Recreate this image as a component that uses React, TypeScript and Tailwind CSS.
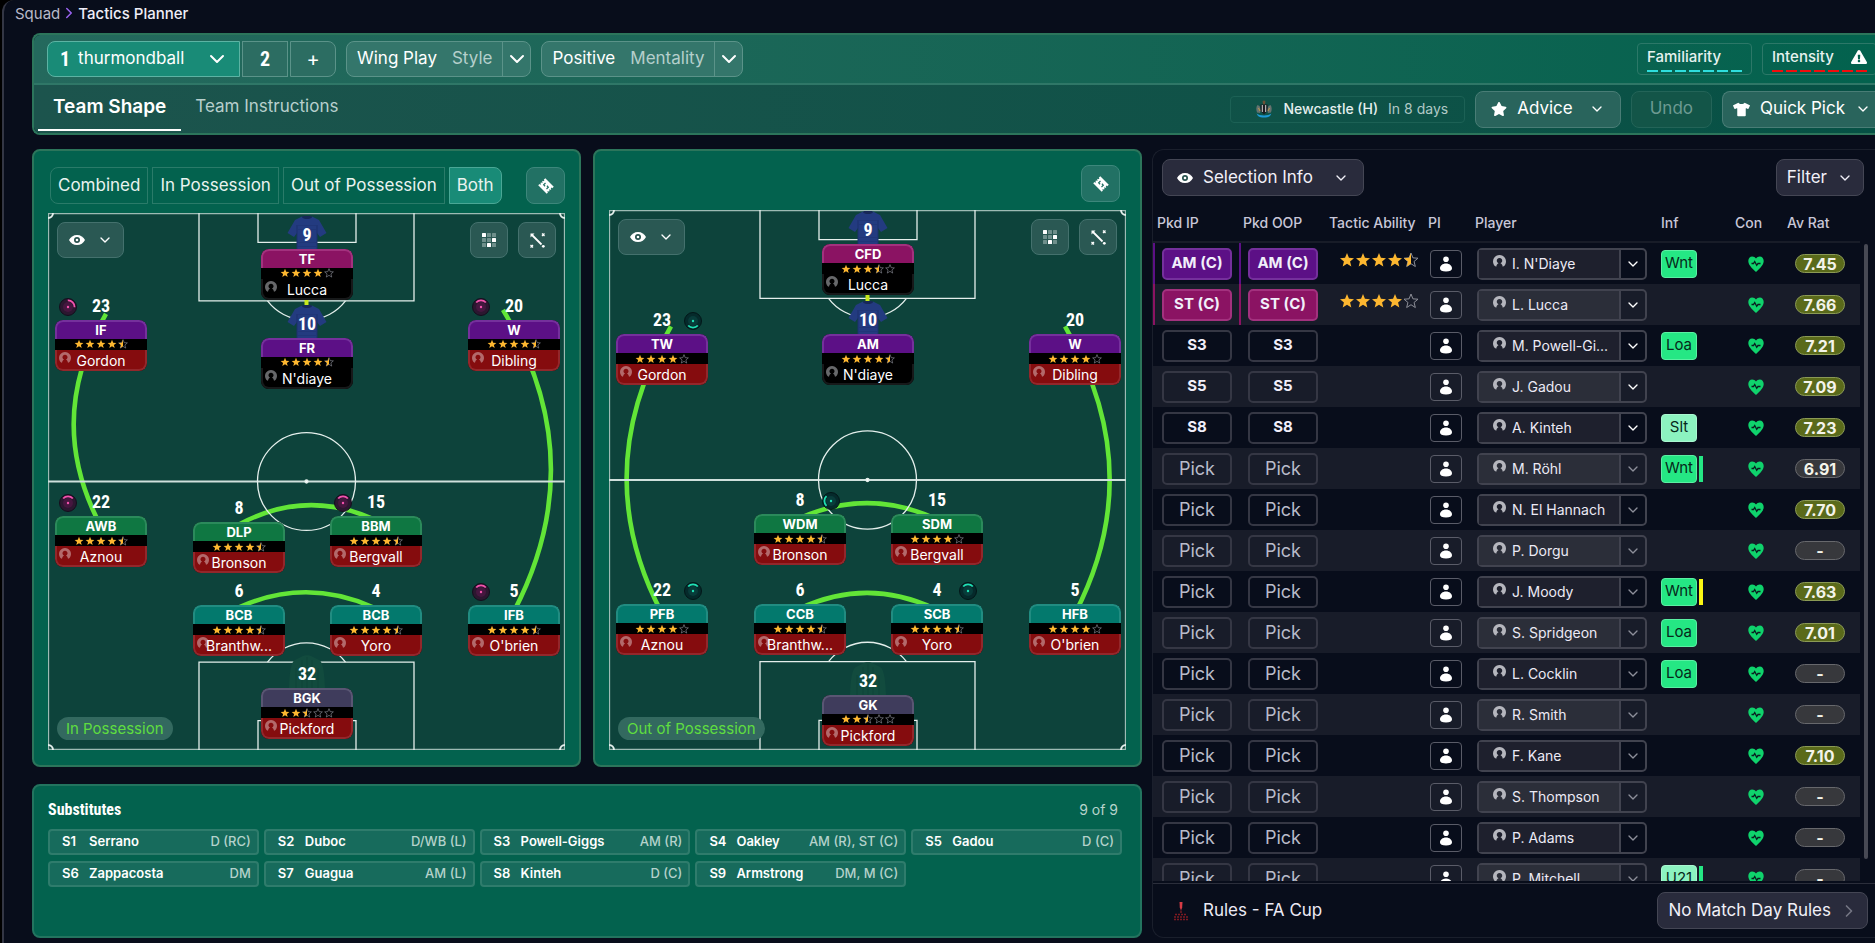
import type { ReactNode } from "react";
import clsx from "clsx";
import { ChevronDown, ChevronRight } from "lucide-react";
import { FaExclamationTriangle, FaStar, FaTshirt } from "react-icons/fa";

type Line = "striker" | "attack" | "midfield" | "defence" | "keeper";
type Dial = { side: "left" | "right"; turn: number };

type PitchPlayer = {
  role: string;
  name: string;
  number: number;
  stars: number;
  line: Line;
  x: number;
  y: number;
  danger?: boolean;
  shirt?: "blue" | "green";
  dial?: Dial;
};

type SquadPlayer = {
  name: string;
  ip: string;
  oop: string;
  line?: Line;
  stars?: number;
  info?: string;
  infoPale?: boolean;
  flag?: "green" | "yellow";
  rating: string;
};

const PITCH_W = 517;
const PITCH_H = 538;
const STAR_PATH = "M12 1.5l2.9 7.3 7.6.5-5.9 4.9 1.9 7.6-6.5-4.2-6.5 4.2 1.9-7.6L1.5 9.3l7.6-.5z";
const NARROW = "font-['Liberation_Sans_Narrow','Roboto_Condensed','Roboto',sans-serif]";

const lineHeader: Record<Line, string> = {
  striker: "bg-[#8b1363] border-[#a3317e]",
  attack: "bg-[#5c1086] border-[#75309c]",
  midfield: "bg-[#0f7742] border-[#2b8a5b]",
  defence: "bg-[#03796d] border-[#218c81]",
  keeper: "bg-[#3f3c5c] border-[#595673]",
};

const inPossession: PitchPlayer[] = [
  { role: "TF", name: "Lucca", number: 9, stars: 4, line: "striker", x: 259, y: 36, shirt: "blue" },
  { role: "IF", name: "Gordon", number: 23, stars: 4.5, line: "attack", x: 53, y: 107, danger: true, dial: { side: "left", turn: 45 } },
  { role: "FR", name: "N'diaye", number: 10, stars: 4.5, line: "attack", x: 259, y: 125, shirt: "blue" },
  { role: "W", name: "Dibling", number: 20, stars: 4.5, line: "attack", x: 466, y: 107, danger: true, dial: { side: "left", turn: 0 } },
  { role: "AWB", name: "Aznou", number: 22, stars: 4.5, line: "midfield", x: 53, y: 304, danger: true, dial: { side: "left", turn: 0 } },
  { role: "DLP", name: "Bronson", number: 8, stars: 4.5, line: "midfield", x: 191, y: 310, danger: true },
  { role: "BBM", name: "Bergvall", number: 15, stars: 4.5, line: "midfield", x: 328, y: 304, danger: true, dial: { side: "left", turn: 0 } },
  { role: "BCB", name: "Branthw...", number: 6, stars: 4.5, line: "defence", x: 191, y: 393, danger: true },
  { role: "BCB", name: "Yoro", number: 4, stars: 4.5, line: "defence", x: 328, y: 393, danger: true },
  { role: "IFB", name: "O'brien", number: 5, stars: 4.5, line: "defence", x: 466, y: 393, danger: true, dial: { side: "left", turn: 0 } },
  { role: "BGK", name: "Pickford", number: 32, stars: 2.5, line: "keeper", x: 259, y: 476, danger: true, shirt: "green" },
];

const outOfPossession: PitchPlayer[] = [
  { role: "CFD", name: "Lucca", number: 9, stars: 3.5, line: "striker", x: 259, y: 34, shirt: "blue" },
  { role: "TW", name: "Gordon", number: 23, stars: 4, line: "attack", x: 53, y: 124, danger: true, dial: { side: "right", turn: 180 } },
  { role: "AM", name: "N'diaye", number: 10, stars: 4.5, line: "attack", x: 259, y: 124, shirt: "blue" },
  { role: "W", name: "Dibling", number: 20, stars: 4, line: "attack", x: 466, y: 124, danger: true },
  { role: "WDM", name: "Bronson", number: 8, stars: 4.5, line: "midfield", x: 191, y: 303, danger: true, dial: { side: "right", turn: -90 } },
  { role: "SDM", name: "Bergvall", number: 15, stars: 4, line: "midfield", x: 328, y: 303, danger: true },
  { role: "PFB", name: "Aznou", number: 22, stars: 4, line: "defence", x: 53, y: 393, danger: true, dial: { side: "right", turn: 0 } },
  { role: "CCB", name: "Branthw...", number: 6, stars: 4.5, line: "defence", x: 191, y: 393, danger: true },
  { role: "SCB", name: "Yoro", number: 4, stars: 4.5, line: "defence", x: 328, y: 393, danger: true, dial: { side: "right", turn: 0 } },
  { role: "HFB", name: "O'brien", number: 5, stars: 4, line: "defence", x: 466, y: 393, danger: true },
  { role: "GK", name: "Pickford", number: 32, stars: 2.5, line: "keeper", x: 259, y: 483, danger: true, shirt: "green" },
];

const inLinks = [
  "M58 101Q-4 207 53 314",
  "M455 97Q545 247 466 399",
  "M191 312Q258 276 326 307",
  "M191 395Q258 365 325 395",
];

const outLinks = [
  "M62 116Q-22 260 53 402",
  "M456 116Q540 260 466 402",
  "M191 307Q258 277 325 307",
  "M191 397Q258 366 325 397",
];

const subs = [
  ["S1", "Serrano", "D (RC)"],
  ["S2", "Duboc", "D/WB (L)"],
  ["S3", "Powell-Giggs", "AM (R)"],
  ["S4", "Oakley", "AM (R), ST (C)"],
  ["S5", "Gadou", "D (C)"],
  ["S6", "Zappacosta", "DM"],
  ["S7", "Guagua", "AM (L)"],
  ["S8", "Kinteh", "D (C)"],
  ["S9", "Armstrong", "DM, M (C)"],
];

const squad: SquadPlayer[] = [
  { name: "I. N'Diaye", ip: "AM (C)", oop: "AM (C)", line: "attack", stars: 4.5, info: "Wnt", rating: "7.45" },
  { name: "L. Lucca", ip: "ST (C)", oop: "ST (C)", line: "striker", stars: 4, rating: "7.66" },
  { name: "M. Powell-Gi...", ip: "S3", oop: "S3", info: "Loa", rating: "7.21" },
  { name: "J. Gadou", ip: "S5", oop: "S5", rating: "7.09" },
  { name: "A. Kinteh", ip: "S8", oop: "S8", info: "Slt", infoPale: true, rating: "7.23" },
  { name: "M. Röhl", ip: "Pick", oop: "Pick", info: "Wnt", flag: "green", rating: "6.91" },
  { name: "N. El Hannach", ip: "Pick", oop: "Pick", rating: "7.70" },
  { name: "P. Dorgu", ip: "Pick", oop: "Pick", rating: "-" },
  { name: "J. Moody", ip: "Pick", oop: "Pick", info: "Wnt", flag: "yellow", rating: "7.63" },
  { name: "S. Spridgeon", ip: "Pick", oop: "Pick", info: "Loa", rating: "7.01" },
  { name: "L. Cocklin", ip: "Pick", oop: "Pick", info: "Loa", rating: "-" },
  { name: "R. Smith", ip: "Pick", oop: "Pick", rating: "-" },
  { name: "F. Kane", ip: "Pick", oop: "Pick", rating: "7.10" },
  { name: "S. Thompson", ip: "Pick", oop: "Pick", rating: "-" },
  { name: "P. Adams", ip: "Pick", oop: "Pick", rating: "-" },
  { name: "P. Mitchell", ip: "Pick", oop: "Pick", info: "U21", infoPale: true, flag: "green", rating: "-" },
];

function Stars({ value, size, gap }: { value: number; size: number; gap: string }) {
  return (
    <span className={clsx("flex items-center", gap)} role="img" aria-label={`${value} stars`}>
      {[0, 1, 2, 3, 4].map((i) => {
        const fill = Math.max(0, Math.min(1, value - i));
        return (
          <svg key={i} width={size} height={size} viewBox="0 0 24 24">
            {fill < 1 && <path d={STAR_PATH} fill="none" stroke="#8d8f98" strokeWidth="1.5" />}
            {fill === 1 && <path d={STAR_PATH} fill="#fdb730" />}
            {fill === 0.5 && <path d="M12 1.5v16.1l-6.5 4.2 1.9-7.6L1.5 9.3l7.6-.5z" fill="#fdb730" />}
          </svg>
        );
      })}
    </span>
  );
}

function EyeIcon() {
  return (
    <svg width="16" height="10" viewBox="0 0 16 10">
      <path d="M8 0C4.4 0 1.5 2 0 5c1.5 3 4.4 5 8 5s6.5-2 8-5C14.5 2 11.6 0 8 0z" fill="#fff" />
      <circle cx="8" cy="5" r="3" fill="#27514d" />
      <circle cx="8" cy="5" r="1.3" fill="#fff" />
    </svg>
  );
}

function GridIcon() {
  const lit = [0, 5, 7];
  return (
    <svg width="15" height="15" viewBox="0 0 15 15">
      {Array.from({ length: 9 }, (_, i) => (
        <rect
          key={i}
          x={(i % 3) * 5}
          y={Math.floor(i / 3) * 5}
          width="4"
          height="4"
          rx="0.5"
          fill={lit.includes(i) ? "#fff" : "#6f908c"}
        />
      ))}
    </svg>
  );
}

function MovementIcon() {
  return (
    <svg width="15" height="15" viewBox="0 0 15 15" stroke="#fff" fill="none">
      <path d="M2 2l9.5 9.5" strokeWidth="1.8" />
      <path d="M0.5 4.5v-4h4z" fill="#fff" stroke="none" />
      <path d="M12 0.5L14.5 3m0-2.5L12 3M0.5 12L3 14.5M3 12L0.5 14.5" strokeWidth="1.3" />
      <circle cx="13.3" cy="13.3" r="1.4" fill="#fff" stroke="none" />
    </svg>
  );
}

function TicketIcon() {
  return (
    <svg width="16" height="16" viewBox="0 0 16 16">
      <g transform="translate(8 8) rotate(45)">
        <path
          d="M-6-5h12v2.2H5v1.2h1v1.2H5V.8h1V2H5v1.2h1V5H-6V3.200h1V2h-1V.8h1v-1.200h-1v-1.200h1v-1.200h-1z"
          fill="#fff"
        />
        <path d="M-2.500-1.800v2.600h2M2.500 1.800v-2.600h-2" fill="none" stroke="#227164" strokeWidth="1.2" />
      </g>
    </svg>
  );
}

function AvatarIcon({ size }: { size: number }) {
  return (
    <svg width={size} height={size} viewBox="0 0 12 12" className="shrink-0">
      <path
        fillRule="evenodd"
        d="M6 0a6 6 0 0 0-5.400 8.600C1 9.800 1.900 10.600 3 10.800c.2-1.500 1-2.700 2.100-3.200a2.500 2.500 0 1 1 1.800 0c1.100.5 1.900 1.700 2.100 3.200 1.100-.2 2-1 2.400-2.200A6 6 0 0 0 6 0z"
        fill="currentColor"
      />
    </svg>
  );
}

function BustIcon() {
  return (
    <svg width="14" height="16" viewBox="0 0 14 16" fill="#fff">
      <circle cx="7" cy="3.2" r="2.8" />
      <path d="M7 7.600c3.500 0 6 2.200 6 4.800 0 1.900-2.200 3-6 3s-6-1.100-6-3c0-2.600 2.500-4.800 6-4.800z" />
    </svg>
  );
}

function HeartIcon() {
  return (
    <svg width="16" height="16" viewBox="0 0 16 16">
      <path d="M8 16C3.500 12 .3 8.800.3 5.100.3 2.400 2 .4 4.200.4 5.800.4 7.200 1.200 8 2.600 8.800 1.200 10.200.4 11.800.4c2.200 0 3.900 2 3.900 4.700 0 3.700-3.200 6.900-7.700 10.900z" fill="#0fd36c" />
      <path d="M3.500 7.500h2l1.200-2 2 3.800L10 7.500h2.500" fill="none" stroke="#0a1c20" strokeWidth="1.3" />
    </svg>
  );
}

function Crest() {
  return (
    <svg width="18" height="18" viewBox="0 0 18 18">
      <path d="M7.5 1.500L9 .3l1.500 1.200-.6 3H8.100z" fill="#6b5136" />
      <path d="M2.500 5c-1.500 2-1.500 4.500-.5 7.500l3 .5 1-3-1.500-4zM15.500 5c1.500 2 1.500 4.500.5 7.500l-3 .5-1-3 1.500-4z" fill="#66726f" />
      <path d="M5.500 4.500h7V11L9 14.500 5.500 11z" fill="#1a1d20" />
      <path d="M7.300 5v7M10.700 5v7" stroke="#d5d5d5" strokeWidth="1" />
      <path d="M3.500 8L5 11M14.500 8L13 11" stroke="#c49a4c" strokeWidth="1" />
      <path d="M1.500 13.500c3 2.500 12 2.500 15 0L15 16c-3 2-9 2-12 0z" fill="#1c9ad6" />
    </svg>
  );
}

function CupIcon() {
  return (
    <svg width="16" height="20" viewBox="0 0 16 20">
      <path d="M6.500 1h3l-.3 5.500L8 9.500 6.800 6.500z" fill="#d63b45" />
      <path d="M8 9.500V12" stroke="#8d2029" strokeWidth="1.200" />
      <path d="M2 13.500h12M1 16h14M1 18.500h14" stroke="#7c1a22" strokeWidth="1.300" strokeDasharray="2 1" />
    </svg>
  );
}

function Shirt({ tone }: { tone: "blue" | "green" }) {
  return (
    <svg width="40" height="34" viewBox="0 0 40 34" className="absolute bottom-full left-1/2 -translate-x-1/2" aria-hidden="true">
      {tone === "blue" ? (
        <>
          <path d="M15 1.500L8 5 .5 18 7 22l3-4v16h20V18l3 4 6.500-4L32 5l-7-3.500c-2.500 2-7.500 2-10 0z" fill="#233b80" />
          <path d="M16 1h8l1 1.500c-3 2-7 2-10 0z" fill="#172857" />
          <path d="M10 10v24M30 10v24" stroke="#1c316d" strokeWidth="1" />
          <path d="M11 10.500h18M11 14.500h18M11 27.500h18M11 31.500h18" stroke="#1f3574" strokeWidth="0.7" />
        </>
      ) : (
        <>
          <path d="M14 3c3-2.500 9-2.500 12 0l7 3.500c3 3 4.500 12 5 27.500H2C2.500 18.500 4 9.500 7 6.500z" fill="#124b3e" />
          <path d="M9 14v20M15 6v28M20 3v31M25 6v28M31 14v20" stroke="#0e4439" strokeWidth="1" />
        </>
      )}
    </svg>
  );
}

function DialIcon({ dial }: { dial: Dial }) {
  const left = dial.side === "left";
  const glow = left ? "#f453ae" : "#1fe0b4";
  return (
    <svg
      width="18"
      height="18"
      viewBox="0 0 18 18"
      className={clsx("absolute -top-[22px]", left ? "left-1" : "right-1.5")}
      aria-hidden="true"
    >
      <circle cx="9" cy="9" r="8.500" fill={left ? "#2c1730" : "#052a2b"} stroke={left ? "#140e1d" : "#031719"} />
      <circle cx="9" cy="9" r="5" fill={left ? "#45173f" : "#083c3a"} />
      <path
        d="M4.200 4.500a6.500 6.500 0 0 1 9.600 0"
        transform={`rotate(${dial.turn} 9 9)`}
        fill="none"
        stroke={glow}
        strokeWidth="1.8"
      />
      <circle cx="9" cy="9" r="1.2" fill={glow} />
    </svg>
  );
}

function PlayerCard({ player }: { player: PitchPlayer }) {
  return (
    <div
      className="absolute w-[92px] -translate-x-1/2"
      style={{ left: `${(player.x / PITCH_W) * 100}%`, top: `${(player.y / PITCH_H) * 100}%` }}
    >
      {player.shirt && <Shirt tone={player.shirt} />}
      {player.dial && <DialIcon dial={player.dial} />}
      <span className={clsx("absolute -top-6 left-0 w-full text-center text-lg leading-5 font-bold text-white", NARROW)}>
        {player.number}
      </span>
      <div className="relative rounded-lg bg-black text-white">
        <div className={clsx("h-[19px] rounded-t-lg border-2 border-b-0 text-center text-[13px] leading-4 font-bold", lineHeader[player.line])}>
          {player.role}
        </div>
        <div className="flex h-[11px] items-center justify-center">
          <Stars value={player.stars} size={10} gap="gap-px" />
        </div>
        <div
          className={clsx(
            "relative h-[21px] rounded-b-lg border-2 border-t-0 text-center text-sm leading-[21px]",
            player.danger ? "border-[#93272b] bg-[#850c0e]" : "border-[#17191a] bg-black",
          )}
        >
          <span className={clsx("absolute top-0.5 left-0.5", player.danger ? "text-[#b3696b]" : "text-[#67686a]")}>
            <AvatarIcon size={12} />
          </span>
          <span className="relative">{player.name}</span>
        </div>
      </div>
    </div>
  );
}

function PitchMarkings({ links }: { links: string[] }) {
  return (
    <svg
      className="absolute inset-0 h-full w-full"
      viewBox={`0 0 ${PITCH_W} ${PITCH_H}`}
      preserveAspectRatio="none"
      fill="none"
      stroke="#e4efec"
      strokeWidth="1.3"
      aria-hidden="true"
    >
      <path d={`M0.5 0.5h516v${PITCH_H - 1}h-516z`} stroke="#9dbbb4" />
      {links.map((d) => (
        <path key={d} d={d} stroke="#62e537" strokeWidth="4.6" />
      ))}
      <path d="M0 269h517" strokeWidth="2" stroke="#cfe0dc" />
      <circle cx="258.5" cy="269" r="49" />
      <circle cx="258.5" cy="269" r="1.5" fill="#fff" />
      <path d="M151 0v88h215V0M210 0v29.5h98V0" />
      <path d="M151 538v-88h215v88M210 538v-29.5h98v29.5" />
      <path d="M219.5 88a49 49 0 0 0 78 0M219.5 450a49 49 0 0 1 78 0" />
      <circle cx="258.5" cy="479.5" r="1.3" fill="#fff" />
      <path d="M5 0a5 5 0 0 1-5 5M512 0a5 5 0 0 0 5 5M0 533a5 5 0 0 1 5 5M517 533a5 5 0 0 0-5 5" strokeWidth="2" />
      <path d="M258.5 84v10" stroke="#c8e81d" strokeWidth="4" />
    </svg>
  );
}

const tile = "flex h-9 items-center justify-center rounded-lg border border-[#44716d] bg-[#2a5853]";

function Pitch({ players, links, label }: { players: PitchPlayer[]; links: string[]; label: string }) {
  return (
    <div className="relative min-h-0 flex-1 bg-[#0d433b]">
      <PitchMarkings links={links} />
      <button className={clsx(tile, "absolute top-[9px] left-[9px] w-[67px] gap-3")} aria-label="View options">
        <EyeIcon />
        <ChevronDown size={16} className="text-white" />
      </button>
      <div className="absolute top-[9px] right-[9px] flex gap-[10px]">
        <button className={clsx(tile, "w-[38px]")} aria-label="Positions">
          <GridIcon />
        </button>
        <button className={clsx(tile, "w-[38px]")} aria-label="Movement">
          <MovementIcon />
        </button>
      </div>
      {players.map((player) => (
        <PlayerCard key={player.role + player.number} player={player} />
      ))}
      <span className="absolute bottom-[10px] left-[9px] rounded-full bg-[#33695f] px-[9px] text-[15px] leading-[23px] text-[#5fdd3f]">
        {label}
      </span>
    </div>
  );
}

function TicketButton() {
  return (
    <button
      className="ml-auto flex h-[37px] w-[39px] items-center justify-center rounded-lg border border-[#3d877b] bg-[#227164]"
      aria-label="Set pieces"
    >
      <TicketIcon />
    </button>
  );
}

function Panel({ className, children }: { className?: string; children: ReactNode }) {
  return (
    <section className={clsx("flex min-w-0 flex-col rounded-lg border-2 border-[#2c755b] bg-[#03624e]", className)}>
      {children}
    </section>
  );
}

function SplitButton({ value, label }: { value: string; label: string }) {
  return (
    <div className="flex h-9 overflow-hidden rounded-lg border border-[#5b9389] bg-[#34766b]">
      <button className="flex items-center gap-[15px] px-[10px] text-[17px] text-white">
        {value}
        <span className="text-[#b5cfcb]">{label}</span>
      </button>
      <button className="flex w-7 items-center justify-center border-l border-[#5b9389] text-white" aria-label={`Change ${label}`}>
        <ChevronDown size={24} />
      </button>
    </div>
  );
}

function Meter({ label, color, warn }: { label: string; color: string; warn?: boolean }) {
  return (
    <div className="h-8 w-[115px] shrink-0 rounded border border-[#2c7868] px-[9px]">
      <div className="flex h-[26px] items-center justify-between text-[15px] font-medium text-[#e6f2ef]">
        {label}
        {warn && <FaExclamationTriangle size={16} className="text-white" />}
      </div>
      <div className="flex gap-[3px]">
        {[0, 1, 2, 3, 4, 5, 6].map((i) => (
          <span key={i} className={clsx("h-0.5 flex-1", color)} />
        ))}
      </div>
    </div>
  );
}

function Header() {
  return (
    <header className="overflow-hidden rounded-l-lg border-2 border-r-0 border-[#2c755b]">
      <div className="flex h-12 items-center gap-[10px] bg-linear-to-r from-[#24695d] to-[#03624e] pl-[13px]">
        <div className="flex gap-0.5">
          <button className="flex h-9 w-[193px] items-center rounded-l-lg border border-[#5cb3a3] bg-[#198b77] pr-2.5 pl-3 text-[17px] text-white">
            <span className={clsx("mr-2 text-xl font-bold", NARROW)}>1</span>
            thurmondball
            <ChevronDown size={24} className="ml-auto" />
          </button>
          <button className={clsx("h-9 w-[46px] border border-[#5b9389] bg-[#2c6d62] text-xl font-bold text-white", NARROW)}>2</button>
          <button className="h-9 w-[46px] rounded-r-lg border border-[#5b9389] bg-[#2c6d62] text-xl text-white" aria-label="Add tactic">
            +
          </button>
        </div>
        <SplitButton value="Wing Play" label="Style" />
        <SplitButton value="Positive" label="Mentality" />
        <div className="-mr-0.5 ml-auto flex gap-[10px]">
          <Meter label="Familiarity" color="bg-[#2fdedd]" />
          <Meter label="Intensity" color="bg-[#f20d0d]" warn />
        </div>
      </div>
      <div className="flex h-[50px] items-center border-t-2 border-[#2f7767] bg-linear-to-r from-[#1c544d] to-[#065145] pl-1">
        <nav className="flex h-full">
          <a href="#shape" className="mb-0.5 flex items-center border-b-2 border-white px-[15px] text-[19px] font-semibold text-white">
            Team Shape
          </a>
          <a href="#instructions" className="mb-0.5 flex items-center border-b-2 border-transparent px-[14px] text-[17px] text-[#b7cfcc]">
            Team Instructions
          </a>
        </nav>
        <div className="ml-auto flex items-center gap-[10px]">
          <div className="flex h-[27px] items-center rounded border border-[#1c6155] pr-4 pl-6 text-sm">
            <Crest />
            <span className="ml-[10px] font-medium text-[#e4efee]">Newcastle (H)</span>
            <span className="ml-[10px] text-[#b0c9c6]">In 8 days</span>
          </div>
          <button className="flex h-[37px] items-center rounded-lg border border-[#497d76] bg-[#29645c] px-[15px] text-[17px] text-white">
            <FaStar size={16} />
            <span className="mx-[10px]">Advice</span>
            <ChevronDown size={16} className="ml-1.5" />
          </button>
          <button className="h-[37px] rounded-lg border border-[#236458] bg-[#135548] px-[18px] text-[17px] text-[#6d9a92]" disabled>
            Undo
          </button>
          <button className="-mr-0.5 flex h-[37px] items-center rounded-l-lg border border-r-0 border-[#497d76] bg-[#29645c] pr-1.5 pl-[10px] text-[17px] text-white">
            <FaTshirt size={17} />
            <span className="mx-[10px]">Quick Pick</span>
            <ChevronDown size={16} />
          </button>
        </div>
      </div>
    </header>
  );
}

function Substitutes() {
  return (
    <Panel className="h-[154px] border-[#23745f] px-[14px] pt-3">
      <div className="mb-2 flex h-[23px] items-center justify-between pr-2">
        <h2 className={clsx("text-base font-bold text-white", NARROW)}>Substitutes</h2>
        <span className="text-sm text-[#b7d4cc]">9 of 9</span>
      </div>
      <ul className="mr-1 grid grid-cols-5 gap-x-[5px] gap-y-1.5">
        {subs.map(([slot, name, position]) => (
          <li key={slot} className="flex h-[26px] items-center rounded border-2 border-[#2f7c6c] bg-[#176b5c] pr-1.5 pl-3 text-[13px] font-semibold text-white">
            <span className="w-[27px]">{slot}</span>
            {name}
            <span className="ml-auto font-medium text-[#b4d2cb]">{position}</span>
          </li>
        ))}
      </ul>
    </Panel>
  );
}

function PickButton({ text, line }: { text: string; line?: Line }) {
  return (
    <button
      className={clsx(
        "block h-8 w-[70px] rounded-[5px] border-2",
        line ? lineHeader[line] : "border-[#353744]",
        text === "Pick" ? "text-lg leading-none text-[#b9bbc9]" : "text-[15px] font-bold text-[#f1effa]",
      )}
    >
      {text}
    </button>
  );
}

function SquadRow({ player, index }: { player: SquadPlayer; index: number }) {
  const striped = index % 2 === 1;
  const strip = player.line === "attack" ? "border-[#5c1086]" : player.line === "striker" ? "border-[#8b1363]" : "border-transparent";
  const picked = player.ip !== "Pick";
  const low = player.rating === "-" || Number(player.rating) < 7;
  return (
    <tr className={clsx("h-[41px]", striped && "bg-[#181c29]")}>
      <td className={clsx("border-l-2 pl-[7px]", strip)}>
        <PickButton text={player.ip} line={player.line} />
      </td>
      <td className={clsx("border-l-2 pl-[7px]", strip)}>
        <PickButton text={player.oop} line={player.line} />
      </td>
      <td className="pb-2 pl-[14px]">{player.stars && <Stars value={player.stars} size={16} gap="" />}</td>
      <td>
        <button className="ml-1.5 flex h-7 w-8 items-center justify-center rounded border border-[#5a5c68]" aria-label={`Instructions for ${player.name}`}>
          <BustIcon />
        </button>
      </td>
      <td>
        <div className="ml-1.5 flex h-8 w-[170px] rounded-[5px] border-2 border-[#41434f]">
          <button className={clsx("flex flex-1 items-center gap-1.5 pl-[14px] text-sm whitespace-nowrap text-[#eceaf5]", striped ? "bg-[#2b2e39]" : "bg-[#1e202d]")}>
            <span className="mb-1 text-[#b5b6bd]">
              <AvatarIcon size={13} />
            </span>
            {player.name}
          </button>
          <button
            className={clsx("flex w-[26px] items-center justify-center border-l-2 border-[#41434f]", picked ? "text-white" : "text-[#8d8f9a]")}
            aria-label={`Options for ${player.name}`}
          >
            <ChevronDown size={16} />
          </button>
        </div>
      </td>
      <td>
        {player.info && (
          <div className="ml-1 flex items-center gap-0.5">
            <span
              className={clsx(
                "flex h-7 w-9 items-center justify-center rounded border text-[15px] text-[#06271a]",
                player.infoPale ? "border-[#a9f7d0] bg-[#8cf3c0]" : "border-[#5bf0a3] bg-[#25e784]",
              )}
            >
              {player.info}
            </span>
            {player.flag && <span className={clsx("h-[26px] w-1", player.flag === "green" ? "bg-[#25e784]" : "bg-[#fbf614]")} />}
          </div>
        )}
      </td>
      <td>
        <div className="ml-[17px]">
          <HeartIcon />
        </div>
      </td>
      <td>
        <span
          className={clsx(
            "ml-3 flex h-[19px] w-[50px] items-center justify-center rounded-full border text-base font-bold text-[#f4f4ea]",
            low ? "border-[#67686c] bg-[#37383c]" : "border-[#8b9a55] bg-[#5a6a1a]",
          )}
        >
          {player.rating}
        </span>
      </td>
    </tr>
  );
}

const columns: [string, string][] = [
  ["Pkd IP", "w-[86px]"],
  ["Pkd OOP", "w-[86px]"],
  ["Tactic Ability", "w-[99px]"],
  ["PI", "w-[47px]"],
  ["Player", "w-[186px]"],
  ["Inf", "w-[74px]"],
  ["Con", "w-[52px]"],
  ["Av Rat", ""],
];

function SquadPanel() {
  const dark = "flex h-[37px] items-center rounded-lg border border-[#444654] bg-[#292b3c] text-[17px] text-[#f1f0f8]";
  return (
    <section className="flex min-h-0 min-w-0 flex-col rounded-l-xl border border-r-0 border-[#1a1f2c]">
      <div className="flex justify-between pt-[9px] pr-[11px] pl-[9px]">
        <button className={clsx(dark, "px-[14px]")}>
          <EyeIcon />
          <span className="mr-5 ml-[10px]">Selection Info</span>
          <ChevronDown size={16} />
        </button>
        <button className={clsx(dark, "gap-[10px] px-[10px]")}>
          Filter
          <ChevronDown size={16} />
        </button>
      </div>
      <div className="mt-2 flex min-h-0 flex-1 overflow-hidden">
        <div className="min-w-0 flex-1">
          <table className="w-full table-fixed border-separate border-spacing-0 text-left">
            <thead>
              <tr className="h-[39px]">
                {columns.map(([title, width]) => (
                  <th key={title} scope="col" className={clsx("border-b-2 border-[#181c28] pl-1 text-sm font-medium whitespace-nowrap text-[#c8c7d8]", width)}>
                    {title}
                  </th>
                ))}
              </tr>
            </thead>
            <tbody>
              {squad.map((player, i) => (
                <SquadRow key={player.name} player={player} index={i} />
              ))}
            </tbody>
          </table>
        </div>
        <div className="mt-[40px] mr-[7px] mb-[22px] ml-1 w-1 rounded-full bg-[#474954]" />
      </div>
      <div className="mt-0.5 flex h-[54px] items-center border-t border-[#2b2e3b] pr-[7px] pl-5">
        <CupIcon />
        <span className="ml-[14px] text-[17px] text-[#eceaf5]">Rules - FA Cup</span>
        <button className={clsx(dark, "ml-auto pr-2 pl-[10px]")}>
          <span className="mr-2">No Match Day Rules</span>
          <ChevronRight size={20} className="text-[#747684]" />
        </button>
      </div>
    </section>
  );
}

function App() {
  const tabs = ["Combined", "In Possession", "Out of Possession", "Both"];

  return (
    <div className="h-screen overflow-hidden bg-black pl-0.5 font-['Inter','Liberation_Sans',sans-serif]">
      <div className="flex h-full flex-col rounded-tl-xl border-l-2 border-[#333644] bg-[#080d1b]">
        <nav className="flex h-[33px] items-start pt-[3px] pl-[11px] text-[15px]" aria-label="Breadcrumb">
          <a href="#squad" className="text-[#b9b9c9]">Squad</a>
          <ChevronRight size={18} className="mt-px text-[#9a63f0]" />
          <a href="#planner" className="font-medium text-[#efedf8]">Tactics Planner</a>
        </nav>
        <div className="flex min-h-0 flex-1 flex-col gap-[14px] pb-[5px] pl-7">
          <Header />
          <main className="grid min-h-0 flex-1 grid-cols-[minmax(0,1110fr)_minmax(0,723fr)] gap-[10px]">
            <div className="flex min-h-0 flex-col gap-[17px]">
              <div className="grid min-h-0 flex-1 grid-cols-2 gap-3">
                <Panel className="gap-[9px] px-[14px] pt-4 pb-[15px]">
                  <div className="flex pl-0.5">
                    <div className="flex gap-1">
                      {tabs.map((tab, i) => (
                        <button
                          key={tab}
                          className={clsx(
                            "h-[37px] border px-[7px] text-[17px] whitespace-nowrap text-[#e9f3f0]",
                            i === 0 && "rounded-l-lg",
                            i === 3 ? "rounded-r-lg border-[#4aa795] bg-[#198b77]" : "border-[#2a7b69]",
                          )}
                        >
                          {tab}
                        </button>
                      ))}
                    </div>
                    <TicketButton />
                  </div>
                  <Pitch players={inPossession} links={inLinks} label="In Possession" />
                </Panel>
                <Panel className="gap-2 px-[14px] pt-[14px] pb-[15px]">
                  <div className="flex pr-1.5">
                    <TicketButton />
                  </div>
                  <Pitch players={outOfPossession} links={outLinks} label="Out of Possession" />
                </Panel>
              </div>
              <Substitutes />
            </div>
            <SquadPanel />
          </main>
        </div>
      </div>
    </div>
  );
}

export default App;
